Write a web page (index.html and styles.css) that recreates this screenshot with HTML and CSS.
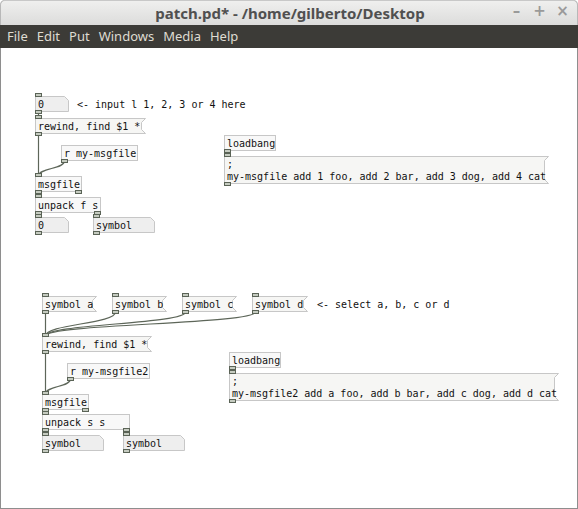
FILE: index.html
```html
<!DOCTYPE html>
<html>
<head>
<meta charset="utf-8">
<link rel="stylesheet" href="styles.css">
</head>
<body>
<div class="window">
  <div class="titlebar">
    <span class="title">patch.pd* - /home/gilberto/Desktop</span>
    <div class="controls"><span class="ctl">&#8211;</span><span class="ctl">+</span><span class="ctl">&#215;</span></div>
  </div>
  <div class="menubar">
    <span>File</span><span>Edit</span><span>Put</span><span>Windows</span><span>Media</span><span>Help</span>
  </div>
  <div class="canvas">
    <svg class="cords" width="578" height="461">
      <g fill="none" stroke="#5d6659" stroke-width="1.2">
        <path d="M38.5 64 V70"/>
        <path d="M38.5 86 V128"/>
        <path d="M64.5 113 C64.5 121, 38.5 120, 38.5 128"/>
        <path d="M38.5 144 V149"/>
        <path d="M38.5 165 V169"/>
        <path d="M97.5 165 L96.5 169"/>
        <path d="M227.5 103 V108"/>
        <path d="M45.5 264 V288"/>
        <path d="M115.5 264 C115.5 276, 45.5 276, 45.5 288"/>
        <path d="M185.5 264 C185.5 276, 45.5 276, 45.5 288"/>
        <path d="M255.5 264 C255.5 276, 45.5 276, 45.5 288"/>
        <path d="M45.5 304 V346"/>
        <path d="M70.5 331 C70.5 339, 45.5 338, 45.5 346"/>
        <path d="M45.5 362 V366"/>
        <path d="M45.5 382 V387"/>
        <path d="M126.5 382 V387"/>
        <path d="M232.5 320 V325"/>
      </g>
    </svg>

    <!-- group 1 -->
    <div class="node atom" style="left:35px;top:48px;width:34px">
      <svg class="shape"><polygon points="0.5,0.5 29.5,0.5 33.5,4.5 33.5,15.5 0.5,15.5"/></svg>
      <span class="txt">0</span><i class="inlet"></i><i class="outlet"></i>
    </div>
    <div class="comment" style="left:77px;top:51px">&lt;- input l 1, 2, 3 or 4 here</div>
    <div class="node msg" style="left:35px;top:70px;width:111px">
      <svg class="shape"><polygon points="0.5,0.5 110.5,0.5 106.5,4.5 106.5,11.5 110.5,15.5 0.5,15.5"/></svg>
      <span class="txt">rewind, find $1 *</span><i class="inlet"></i><i class="outlet"></i>
    </div>
    <div class="node obj" style="left:61px;top:97px;width:77px">
      <span class="txt">r my-msgfile</span><i class="outlet"></i>
    </div>
    <div class="node obj" style="left:35px;top:128px;width:47px">
      <span class="txt">msgfile</span><i class="inlet"></i><i class="outlet"></i><i class="outlet right"></i>
    </div>
    <div class="node obj" style="left:35px;top:149px;width:66px">
      <span class="txt">unpack f s</span><i class="inlet"></i><i class="outlet"></i><i class="outlet right"></i>
    </div>
    <div class="node atom" style="left:35px;top:169px;width:34px">
      <svg class="shape"><polygon points="0.5,0.5 29.5,0.5 33.5,4.5 33.5,15.5 0.5,15.5"/></svg>
      <span class="txt">0</span><i class="inlet"></i><i class="outlet"></i>
    </div>
    <div class="node atom" style="left:93px;top:169px;width:62px">
      <svg class="shape"><polygon points="0.5,0.5 57.5,0.5 61.5,4.5 61.5,15.5 0.5,15.5"/></svg>
      <span class="txt">symbol</span><i class="inlet"></i><i class="outlet"></i>
    </div>
    <div class="node obj" style="left:224px;top:87px;width:52px">
      <span class="txt">loadbang</span><i class="outlet"></i>
    </div>
    <div class="node msg tall" style="left:224px;top:108px;width:325px">
      <svg class="shape"><polygon points="0.5,0.5 324.5,0.5 320.5,4.5 320.5,23.5 324.5,27.5 0.5,27.5"/></svg>
      <span class="txt">;<br>my-msgfile add 1 foo, add 2 bar, add 3 dog, add 4 cat</span><i class="inlet"></i><i class="outlet"></i>
    </div>

    <!-- group 2 -->
    <div class="node msg" style="left:42px;top:248px;width:55px">
      <svg class="shape"><polygon points="0.5,0.5 54.5,0.5 50.5,4.5 50.5,11.5 54.5,15.5 0.5,15.5"/></svg>
      <span class="txt">symbol a</span><i class="inlet"></i><i class="outlet"></i>
    </div>
    <div class="node msg" style="left:112px;top:248px;width:55px">
      <svg class="shape"><polygon points="0.5,0.5 54.5,0.5 50.5,4.5 50.5,11.5 54.5,15.5 0.5,15.5"/></svg>
      <span class="txt">symbol b</span><i class="inlet"></i><i class="outlet"></i>
    </div>
    <div class="node msg" style="left:182px;top:248px;width:55px">
      <svg class="shape"><polygon points="0.5,0.5 54.5,0.5 50.5,4.5 50.5,11.5 54.5,15.5 0.5,15.5"/></svg>
      <span class="txt">symbol c</span><i class="inlet"></i><i class="outlet"></i>
    </div>
    <div class="node msg" style="left:252px;top:248px;width:56px">
      <svg class="shape"><polygon points="0.5,0.5 55.5,0.5 51.5,4.5 51.5,11.5 55.5,15.5 0.5,15.5"/></svg>
      <span class="txt">symbol d</span><i class="inlet"></i><i class="outlet"></i>
    </div>
    <div class="comment" style="left:317px;top:251px">&lt;- select a, b, c or d</div>
    <div class="node msg" style="left:42px;top:288px;width:110px">
      <svg class="shape"><polygon points="0.5,0.5 109.5,0.5 105.5,4.5 105.5,11.5 109.5,15.5 0.5,15.5"/></svg>
      <span class="txt">rewind, find $1 *</span><i class="inlet"></i><i class="outlet"></i>
    </div>
    <div class="node obj" style="left:67px;top:315px;width:83px">
      <span class="txt">r my-msgfile2</span><i class="outlet"></i>
    </div>
    <div class="node obj" style="left:42px;top:346px;width:47px">
      <span class="txt">msgfile</span><i class="inlet"></i><i class="outlet"></i><i class="outlet right"></i>
    </div>
    <div class="node obj" style="left:42px;top:366px;width:88px">
      <span class="txt">unpack s s</span><i class="inlet"></i><i class="outlet"></i><i class="outlet right"></i>
    </div>
    <div class="node atom" style="left:42px;top:387px;width:62px">
      <svg class="shape"><polygon points="0.5,0.5 57.5,0.5 61.5,4.5 61.5,15.5 0.5,15.5"/></svg>
      <span class="txt">symbol</span><i class="inlet"></i><i class="outlet"></i>
    </div>
    <div class="node atom" style="left:123px;top:387px;width:62px">
      <svg class="shape"><polygon points="0.5,0.5 57.5,0.5 61.5,4.5 61.5,15.5 0.5,15.5"/></svg>
      <span class="txt">symbol</span><i class="inlet"></i><i class="outlet"></i>
    </div>
    <div class="node obj" style="left:229px;top:304px;width:52px">
      <span class="txt">loadbang</span><i class="outlet"></i>
    </div>
    <div class="node msg tall" style="left:229px;top:325px;width:330px">
      <svg class="shape"><polygon points="0.5,0.5 329.5,0.5 325.5,4.5 325.5,23.5 329.5,27.5 0.5,27.5"/></svg>
      <span class="txt">;<br>my-msgfile2 add a foo, add b bar, add c dog, add d cat</span><i class="inlet"></i><i class="outlet"></i>
    </div>
  </div>
</div>
</body>
</html>
```

FILE: styles.css
```css
html, body {
  margin: 0;
  padding: 0;
  background: #ffffff;
}
.window {
  width: 578px;
  height: 509px;
  display: flex;
  flex-direction: column;
  overflow: hidden;
}
.titlebar {
  height: 25px;
  flex: none;
  position: relative;
  display: flex;
  align-items: center;
  justify-content: center;
  background: linear-gradient(#f0f0ef, #dcdcdb);
  border-radius: 5px 5px 0 0;
  box-shadow: inset 1px 0 #b8b8b8, inset -1px 0 #b8b8b8, inset 0 1px #c8c8c8;
}
.title {
  font-family: "Noto Sans", "DejaVu Sans", sans-serif;
  font-weight: bold;
  font-size: 15px;
  color: #505050;
  margin-left: 2px;
}
.controls {
  position: absolute;
  right: 9px;
  top: 2px;
  display: flex;
  gap: 10px;
}
.ctl {
  font-family: "DejaVu Sans", sans-serif;
  font-weight: bold;
  font-size: 15px;
  color: #9a9a9a;
  width: 13px;
  text-align: center;
}
.menubar {
  height: 23px;
  flex: none;
  background: #3c3b37;
  display: flex;
  align-items: center;
  gap: 9px;
  padding-left: 7px;
  padding-bottom: 1px;
  box-sizing: border-box;
  font-family: "Noto Sans", "DejaVu Sans", sans-serif;
  font-size: 13px;
  color: #dfdbd2;
}
.canvas {
  flex: 1;
  position: relative;
  background: #ffffff;
  box-shadow: inset 1px 0 #8e8e8e, inset -1px 0 #8e8e8e, inset 0 -1px #8e8e8e;
}
.cords {
  position: absolute;
  left: 0;
  top: 0;
}
.node {
  position: absolute;
  height: 16px;
  box-sizing: border-box;
  font-family: "DejaVu Sans Mono", monospace;
  font-size: 10px;
  line-height: 12px;
  color: #111111;
  white-space: nowrap;
}
.node.tall {
  height: 28px;
}
.obj {
  border: 1px solid #c7c7c7;
  background: #f8f8f8;
  padding: 2px 2px 0;
}
.msg, .atom {
  padding: 3px 3px 0;
}
.shape {
  position: absolute;
  left: 0;
  top: 0;
  width: 100%;
  height: 100%;
  overflow: visible;
}
.msg .shape polygon {
  fill: #f6f6f4;
  stroke: #c7c7c7;
  stroke-width: 1;
}
.atom .shape polygon {
  fill: #eeeeee;
  stroke: #c7c7c7;
  stroke-width: 1;
}
.txt {
  position: relative;
  display: block;
}
.inlet, .outlet {
  position: absolute;
  left: 0;
  width: 7px;
  height: 4px;
  box-sizing: border-box;
  border: 1px solid #5a6356;
  background: #c5cbc0;
}
.obj .inlet, .obj .outlet {
  left: -1px;
}
.inlet {
  top: -3px;
}
.obj .inlet {
  top: -4px;
}
.outlet {
  bottom: -2px;
}
.obj .outlet {
  bottom: -3px;
}
.obj .outlet.right {
  left: auto;
  right: -1px;
}
.comment {
  position: absolute;
  font-family: "DejaVu Sans Mono", monospace;
  font-size: 10px;
  line-height: 12px;
  color: #111111;
  white-space: nowrap;
}
```
